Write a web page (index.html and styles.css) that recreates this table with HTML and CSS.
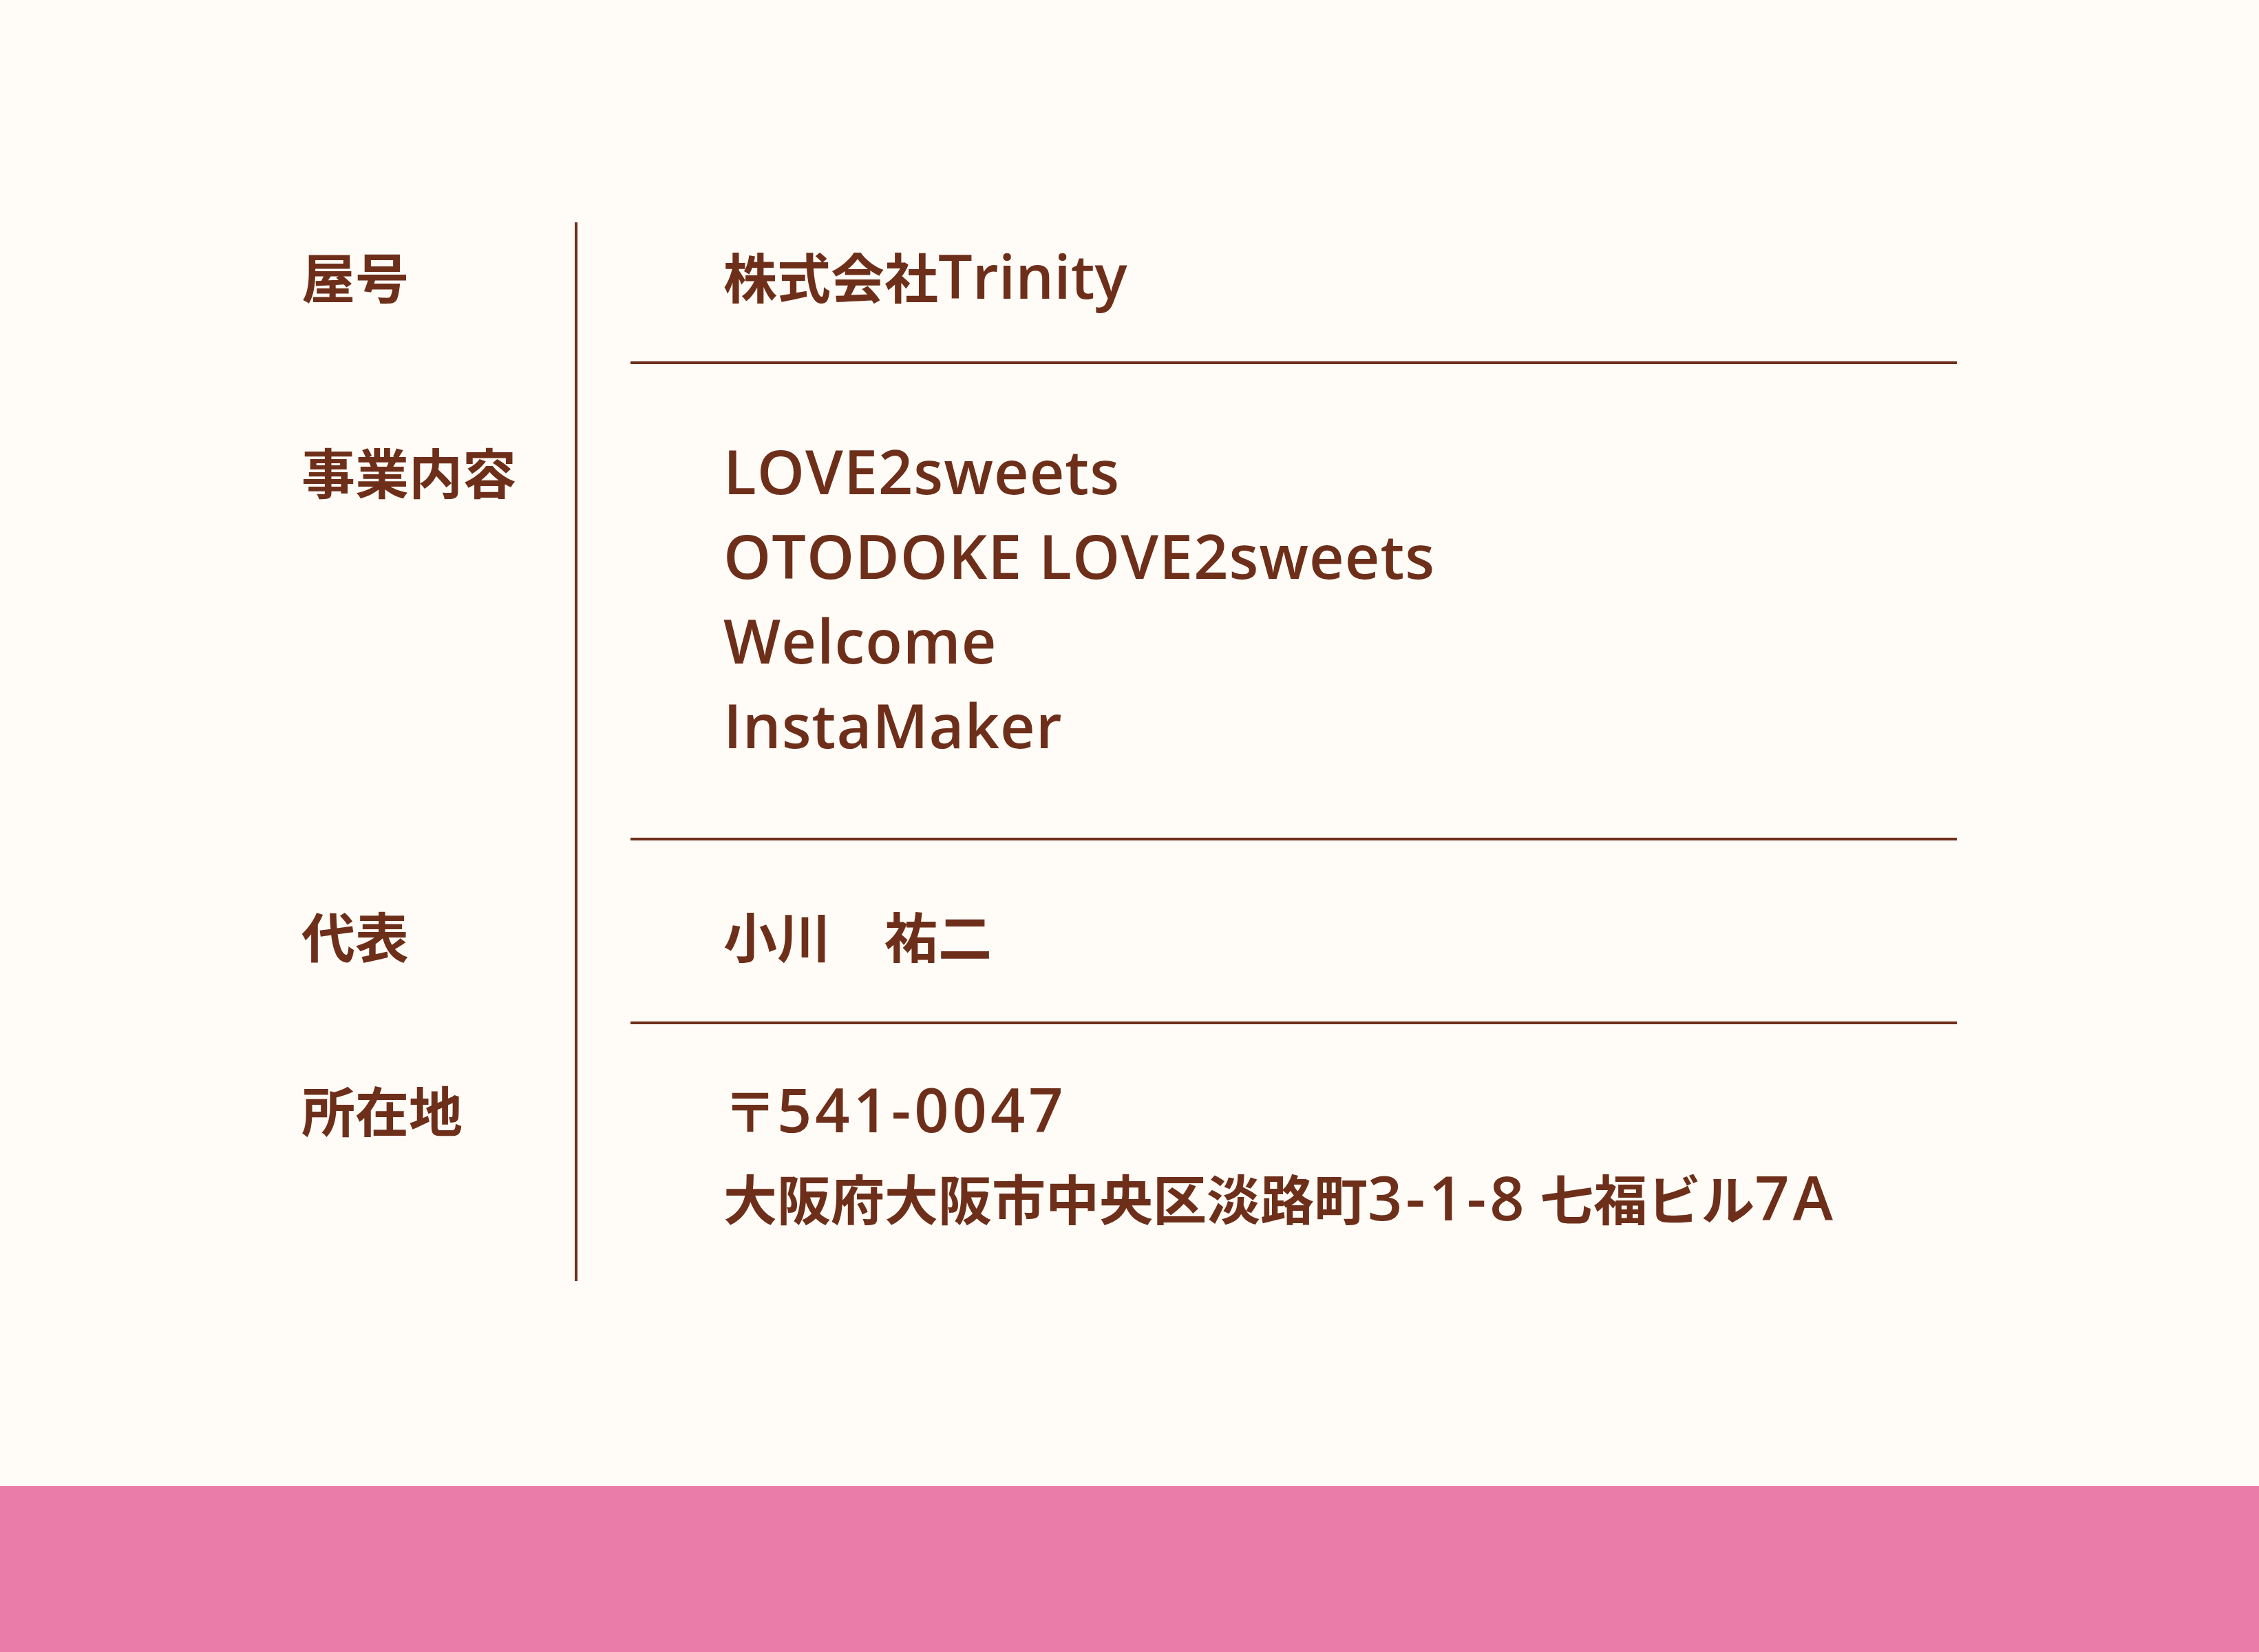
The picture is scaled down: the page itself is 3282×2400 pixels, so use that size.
FILE: index.html
```html
<!DOCTYPE html>
<html lang="ja">
<head>
<meta charset="utf-8">
<title>会社概要</title>
<link rel="stylesheet" href="styles.css">
</head>
<body>
<main class="company">
  <dl class="info">
    <div class="row row-name">
      <dt class="label">屋号</dt>
      <dd class="value">
        <div class="value-inner">
          <p class="line">株式会社<span class="en">Trinity</span></p>
        </div>
      </dd>
    </div>
    <div class="row row-business">
      <dt class="label">事業内容</dt>
      <dd class="value">
        <div class="value-inner">
          <p class="line en">LOVE2sweets</p>
          <p class="line en">OTODOKE LOVE2sweets</p>
          <p class="line en">Welcome</p>
          <p class="line en">InstaMaker</p>
        </div>
      </dd>
    </div>
    <div class="row row-ceo">
      <dt class="label">代表</dt>
      <dd class="value">
        <div class="value-inner">
          <p class="line">小川　祐二</p>
        </div>
      </dd>
    </div>
    <div class="row row-address">
      <dt class="label">所在地</dt>
      <dd class="value">
        <div class="value-inner">
          <p class="line">〒<span class="en num">541-0047</span></p>
          <p class="line">大阪府大阪市中央区淡路町<span class="en num">3-1-8</span> 七福ビル<span class="en num">7A</span></p>
        </div>
      </dd>
    </div>
  </dl>
</main>
<footer class="footer"></footer>
</body>
</html>
```

FILE: styles.css
```css
html,
body {
  margin: 0;
  padding: 0;
}

body {
  min-height: 100vh;
  display: flex;
  flex-direction: column;
  background: #fffcf7;
  color: #6e2f1a;
  font-family: "Noto Sans CJK JP", sans-serif;
  font-weight: 700;
  font-size: 78px;
}

.company {
  padding-top: 323px;
}

.info {
  margin: 0 0 0 438px;
  width: 2405px;
}

.row {
  display: grid;
  grid-template-columns: 397px 1fr;
  line-height: var(--lh);
  --lh: 124px;
  --pt: 15px;
  --pb: 63px;
}

.row-business {
  --lh: 123px;
  --pt: 94px;
  --pb: 102px;
}

.row-ceo {
  --pt: 75px;
  --pb: 64px;
}

.row-address {
  --lh: 128px;
  --pt: 59px;
  --pb: 58px;
}

.label {
  margin: 0;
  padding-top: var(--pt);
  white-space: nowrap;
}

.value {
  margin: 0;
  border-left: 4px solid #6e2f1a;
  padding-left: 77px;
}

.value-inner {
  padding: var(--pt) 0 var(--pb) 135px;
  border-bottom: 4px solid #6e2f1a;
}

.row:last-child .value-inner {
  border-bottom: none;
}

.line {
  margin: 0;
  white-space: nowrap;
}

.en {
  font-family: "Open Sans", sans-serif;
  font-size: 88px;
  font-weight: 600;
}

.row-business .en {
  letter-spacing: 1px;
}

.num {
  letter-spacing: 5px;
}

.footer {
  margin-top: auto;
  height: 241px;
  background: #e97ca8;
}
```
